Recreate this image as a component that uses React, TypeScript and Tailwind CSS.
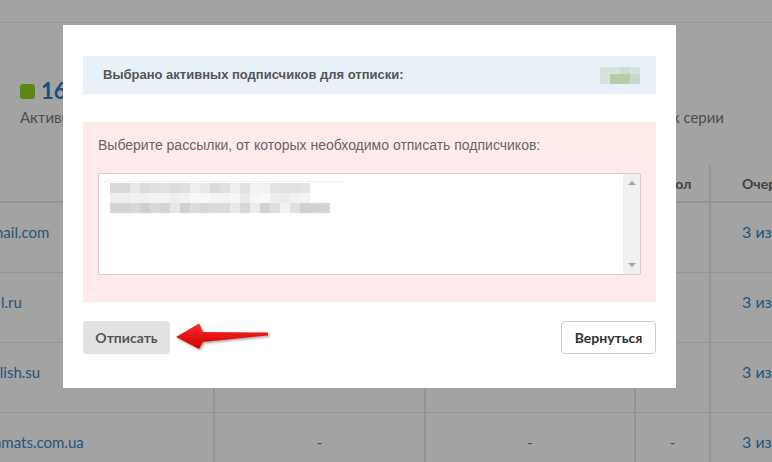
import React from "react";

const row1 = ["#d9d9d9","#d9d9d9","#e6e9e9","#dcdcdc","#e0e0e0","#e0e2e2","#dcdcdc","#e0e0e0","#eceef0","#e6e9e9","#d7dbdb","#e0e0e0","#eceef0","#e0e2e2","#f0f2f4","#f2f2f0","#e4e4e4","#e0e2e2","#e0e2e2","#e4e4e4"];
const row2 = ["#eeeeee","#eeeeee","#eff1f1","#f0f0f0","#f2f2f2","#f3f4f4","#eeeeee","#f2f2f2","#f7f8f9","#f7f7f7","#f4f4f4","#f4f4f4","#f6f6f6","#eaeaea","#f6f6f6","#f8f8f8","#eeeeee","#ebebeb","#f0f2f2","#f3f3f3"];
const row3 = ["#d4d4d4","#d4d4d4","#d6d9dc","#cfcfcf","#d9d9d9","#d4d6d6","#e4e6e8","#d0d0cc","#dcdcdc","#d6d8da","#d9d9d6","#d9dadc","#e6e9ea","#d6d6d6","#ececea","#cfd4d8","#dedede","#f0f2f2","#e0e0de","#cfd1d4","#d4d2d0","#d0d4d8"];

function Pixels({ colors, h }: { colors: string[]; h: number }) {
  return (
    <div className="flex">
      {colors.map((c, i) => (
        <div key={i} className="w-[10px]" style={{ backgroundColor: c, height: h }} />
      ))}
    </div>
  );
}

const rows = [
  { email: "mail.com", ml: "-ml-[9px]" },
  { email: "l.ru", ml: "ml-[1px]" },
  { email: "glish.su", ml: "-ml-[8px]" },
  { email: "nmats.com.ua", ml: "-ml-[7px]" },
];

export default function App() {
  return (
    <div className="relative w-[772px] h-[462px] overflow-hidden bg-white font-['Lato',sans-serif]">
      {/* background page */}
      <div className="h-[23px] border-b border-[#ededed]" />
      <div className="h-[142px] flex justify-between pl-[20px] pr-[48px] pt-[58px]">
        <div className="flex flex-col">
          <div className="flex items-center gap-[6px] h-[20px]">
            <div className="w-[15px] h-[15px] rounded-[3px] bg-[#92d41f]" />
            <span className="text-[22px] font-bold text-[#2b7cb5] leading-none">163</span>
          </div>
          <div className="mt-[5px] text-[15px] text-[#7a7a7a]">Активных</div>
        </div>
        <div className="pt-[25px] text-[15px] text-[#7a7a7a]">Завершивших серии</div>
      </div>
      <div className="grid grid-cols-[215px_211px_210px_75px_1fr]">
        {["Email", "Дата", "Источник", "Пол", "Очередь"].map((h, i) => (
          <div
            key={h}
            className={`h-[38px] flex items-center text-[14px] font-bold text-[#666] border-b-2 border-[#e8e8e8] ${i < 4 ? "border-r-2" : ""} ${i === 4 ? "pl-[31px]" : i === 3 ? "pl-[29px]" : "justify-center"}`}
          >
            {h}
          </div>
        ))}
        {rows.map((r) => (
          <React.Fragment key={r.email}>
            <div className="h-[70px] border-r-2 border-b border-[#e8e8e8] overflow-hidden pt-[18px]">
              <span className={`block whitespace-nowrap text-[15px] text-[#3a85bd] ${r.ml}`}>{r.email}</span>
            </div>
            <div className="h-[70px] border-r-2 border-b border-[#e8e8e8] flex justify-center pt-[18px] text-[15px] text-[#777]">-</div>
            <div className="h-[70px] border-r-2 border-b border-[#e8e8e8] flex justify-center pt-[18px] text-[15px] text-[#777]">-</div>
            <div className="h-[70px] border-r-2 border-b border-[#e8e8e8] flex justify-center pt-[18px] text-[15px] text-[#777]">-</div>
            <div className="h-[70px] border-b border-[#e8e8e8] pl-[31px] pt-[17px] text-[16px] text-[#3a85bd] whitespace-nowrap">3 из 3</div>
          </React.Fragment>
        ))}
      </div>

      {/* overlay */}
      <div className="absolute inset-0 bg-black/[0.36]" />

      {/* modal */}
      <div className="absolute left-[63px] top-[25px] w-[613px] h-[363px] bg-white px-[20px] pt-[31px] font-['Liberation_Sans',Arial,sans-serif]">
        <div className="h-[38px] bg-[#e9f1f8] flex items-center justify-between pl-[20px] pr-[16px]">
          <span className="text-[13px] font-bold text-[#555]">Выбрано активных подписчиков для отписки:</span>
          <div className="flex flex-col">
            <Pixels colors={["#d6e2da", "#d8e4da", "#d0dcd2", "#d8e2dc"]} h={7} />
            <Pixels colors={["#d6e2da", "#b8cca8", "#b8cca8", "#c8d8cc"]} h={10} />
          </div>
        </div>

        <div className="mt-[28px] h-[180px] bg-[#feebe9] px-[15px] pt-[14px]">
          <div className="text-[14px] leading-[18px] text-[#666]">
            Выберите рассылки, от которых необходимо отписать подписчиков:
          </div>
          <div className="mt-[19px] h-[102px] border border-[#cfd2d4] rounded-[2px] bg-white flex">
            <div className="flex-1 pl-[5px] pt-[7px]">
              <div className="h-px w-[240px] bg-[#f0f0f0]" />
              <div className="pl-[6px] mt-[1px]">
                <Pixels colors={row1} h={10} />
                <Pixels colors={row2} h={10} />
                <Pixels colors={row3} h={10} />
              </div>
            </div>
            <div className="w-[17px] bg-[#f0f0f0] flex flex-col items-center justify-between py-[7px]">
              <div className="w-0 h-0 border-l-[4px] border-r-[4px] border-b-[4px] border-l-transparent border-r-transparent border-b-[#a3a3a3]" />
              <div className="w-0 h-0 border-l-[4px] border-r-[4px] border-t-[4px] border-l-transparent border-r-transparent border-t-[#a3a3a3]" />
            </div>
          </div>
        </div>

        <div className="mt-[19px] flex justify-between font-['Lato',sans-serif]">
          <button className="w-[87px] h-[33px] rounded-[4px] bg-[#e2e2e2] text-[14px] font-bold text-[#555]">
            Отписать
          </button>
          <button className="w-[95px] h-[33px] rounded-[4px] bg-white border border-[#cccccc] text-[14px] font-bold text-[#333]">
            Вернуться
          </button>
        </div>
      </div>

      {/* red arrow annotation */}
      <svg className="absolute left-0 top-0" width="772" height="462" viewBox="0 0 772 462">
        <defs>
          <linearGradient id="ar" x1="0" y1="0" x2="0" y2="1">
            <stop offset="0" stopColor="#ff2a2a" />
            <stop offset="1" stopColor="#c80000" />
          </linearGradient>
          <filter id="sh" x="-20%" y="-40%" width="140%" height="180%">
            <feDropShadow dx="1.5" dy="1.5" stdDeviation="1.2" floodColor="#000" floodOpacity="0.35" />
          </filter>
        </defs>
        <path
          d="M176,337 L199,323.5 L203,332 L268,332.5 L268,335.5 L203,342 L199,349 Z"
          fill="url(#ar)"
          filter="url(#sh)"
        />
      </svg>
    </div>
  );
}
